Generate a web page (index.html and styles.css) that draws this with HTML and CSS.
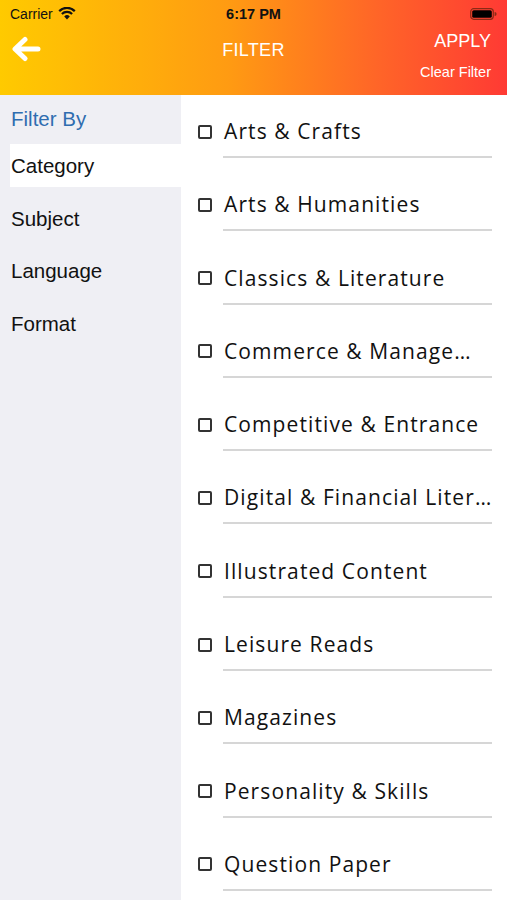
FILE: index.html
```html
<!DOCTYPE html>
<html lang="en">
<head>
    <meta charset="UTF-8">
    <meta name="viewport" content="width=device-width, initial-scale=1.0">
    <title>Filter</title>
    <link rel="stylesheet" href="styles.css">
</head>
<body>
    <header class="topbar">
        <div class="statusbar">
            <div class="carrier">
                Carrier
                <svg class="wifi" width="18" height="13" viewBox="0 0 18 13">
                    <path d="M9 12.5 L6.2 9.4 A4 4 0 0 1 11.8 9.4 Z" fill="#111"/>
                    <path d="M3.9 7 A7.3 7.3 0 0 1 14.1 7" stroke="#111" stroke-width="2.2" fill="none"/>
                    <path d="M1.2 4.1 A11 11 0 0 1 16.8 4.1" stroke="#111" stroke-width="2.2" fill="none"/>
                </svg>
            </div>
            <div class="clock">6:17 PM</div>
            <div class="battery">
                <svg width="27" height="12" viewBox="0 0 27 12">
                    <rect x="0.7" y="0.7" width="22.6" height="10.6" rx="3" fill="none" stroke="#8a2a16" stroke-width="1.2"/>
                    <rect x="2.2" y="2.2" width="19.6" height="7.6" rx="1.6" fill="#000"/>
                    <path d="M24.6 4 A2 2 0 0 1 24.6 8 Z" fill="#8a2a16"/>
                </svg>
            </div>
        </div>
        <div class="navbar">
            <svg class="back" width="30" height="26" viewBox="0 0 30 26">
                <path d="M27 13 H5 M14 3.5 L4 13 L14 22.5" stroke="#fff" stroke-width="5" stroke-linecap="round" stroke-linejoin="round" fill="none"/>
            </svg>
            <div class="title">FILTER</div>
            <div class="actions">
                <span class="apply">APPLY</span>
                <span class="clear">Clear Filter</span>
            </div>
        </div>
    </header>

    <main class="content">
        <aside class="sidebar">
            <div class="sidebar-head">Filter By</div>
            <div class="side-item active">Category</div>
            <div class="side-item">Subject</div>
            <div class="side-item">Language</div>
            <div class="side-item">Format</div>
        </aside>
        <section class="options">
            <div class="option"><span class="box"></span><span class="label">Arts &amp; Crafts</span></div>
            <div class="option"><span class="box"></span><span class="label">Arts &amp; Humanities</span></div>
            <div class="option"><span class="box"></span><span class="label">Classics &amp; Literature</span></div>
            <div class="option"><span class="box"></span><span class="label">Commerce &amp; Manage…</span></div>
            <div class="option"><span class="box"></span><span class="label">Competitive &amp; Entrance</span></div>
            <div class="option"><span class="box"></span><span class="label">Digital &amp; Financial Liter…</span></div>
            <div class="option"><span class="box"></span><span class="label">Illustrated Content</span></div>
            <div class="option"><span class="box"></span><span class="label">Leisure Reads</span></div>
            <div class="option"><span class="box"></span><span class="label">Magazines</span></div>
            <div class="option"><span class="box"></span><span class="label">Personality &amp; Skills</span></div>
            <div class="option"><span class="box"></span><span class="label">Question Paper</span></div>
        </section>
    </main>
</body>
</html>
```

FILE: styles.css
```css
body {
    margin: 0;
    font-family: "Liberation Sans", Arial, sans-serif;
    background-color: #ffffff;
    height: 900px;
    overflow: hidden;
}
.topbar {
    height: 95px;
    background: linear-gradient(90deg, #ffca00 0%, #ff9b12 45%, #ff6428 75%, #ff3a34 100%);
    color: #ffffff;
}
.statusbar {
    height: 27px;
    display: flex;
    align-items: center;
    justify-content: space-between;
    padding: 0 10px;
    font-size: 14px;
    color: #111;
}
.carrier {
    display: flex;
    align-items: center;
    gap: 5px;
    width: 120px;
}
.clock {
    font-weight: bold;
    font-size: 14.5px;
}
.battery {
    width: 120px;
    display: flex;
    justify-content: flex-end;
}
.navbar {
    height: 68px;
    display: flex;
    align-items: flex-start;
    justify-content: space-between;
    padding: 0 16px 0 11px;
    position: relative;
}
.back {
    margin-top: 9px;
}
.title {
    position: absolute;
    left: 0;
    right: 0;
    top: 13px;
    text-align: center;
    font-size: 18px;
    letter-spacing: 0.3px;
}
.actions {
    display: flex;
    flex-direction: column;
    align-items: flex-end;
}
.apply {
    font-size: 18px;
    margin-top: 3px;
    line-height: 22px;
}
.clear {
    font-size: 14.5px;
    margin-top: 12px;
}
.content {
    display: flex;
    height: 805px;
}
.sidebar {
    width: 181px;
    flex-shrink: 0;
    background-color: #efeff4;
}
.sidebar-head {
    color: #2f6db0;
    font-size: 20.5px;
    padding: 12px 0 0 11px;
    height: 37px;
}
.side-item {
    height: 43px;
    line-height: 43px;
    margin: 0 0 9.5px 10px;
    padding-left: 1px;
    font-size: 20.5px;
    color: #111;
}
.side-item.active {
    background-color: #ffffff;
}
.options {
    flex: 1;
}
.option {
    display: flex;
    align-items: center;
    height: 63px;
    margin: 0 16px 10.3px 17px;
    position: relative;
}
.option::after {
    content: "";
    position: absolute;
    left: 25px;
    right: 0;
    bottom: 0;
    height: 2px;
    background-color: #d6d6d6;
}
.box {
    width: 10px;
    height: 10px;
    border: 2px solid #333;
    border-radius: 2px;
    margin-right: 12px;
    margin-top: 10px;
}
.label {
    font-family: "Open Sans", sans-serif;
    font-size: 21px;
    letter-spacing: 1.1px;
    color: #111;
    margin-top: 9px;
    white-space: nowrap;
}
```
